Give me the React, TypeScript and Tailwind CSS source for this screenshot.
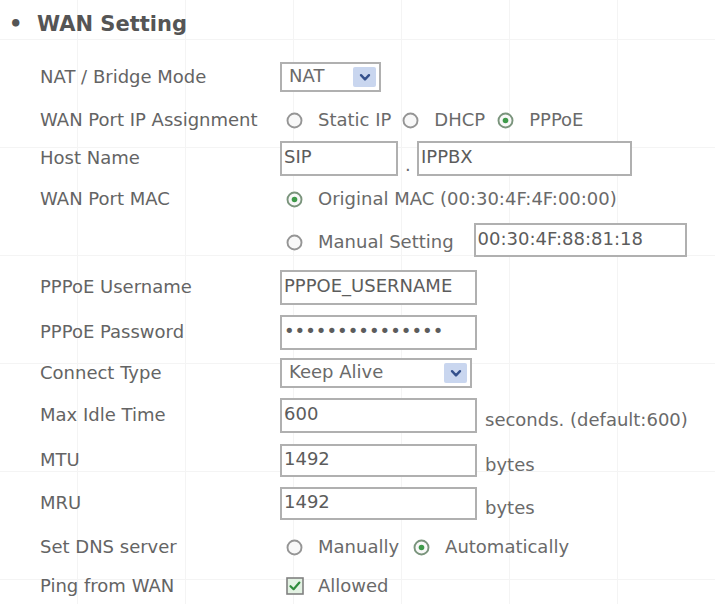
import React from "react";

// ============================================================================
// SMALL CONTROLS
// ============================================================================

function Radio({ checked }: { checked?: boolean }) {
  return (
    <svg width="17" height="17" viewBox="0 0 17 17" className="shrink-0">
      <circle cx="8.5" cy="8.5" r="7" fill="#f8f8f8" stroke={checked ? "#7a947c" : "#959595"} strokeWidth="1.9" />
      {checked && <circle cx="8.5" cy="8.5" r="2.8" fill="#3f9a4a" />}
    </svg>
  );
}

function RadioOption({ label, checked, className = "" }: { label: string; checked?: boolean; className?: string }) {
  return (
    <span className={`flex items-center ${className}`}>
      <Radio checked={checked} />
      <span className="ml-[15px]">{label}</span>
    </span>
  );
}

function Checkbox() {
  return (
    <svg width="18" height="18" viewBox="0 0 18 18" className="shrink-0">
      <rect x="1" y="1" width="16" height="16" fill="#e3f2e3" stroke="#808080" strokeWidth="1.6" />
      <path d="M4.5 9.2 L7.6 12.2 L13.4 5.6" fill="none" stroke="#2f8c3c" strokeWidth="2.2" strokeLinecap="round" strokeLinejoin="round" />
    </svg>
  );
}

function TextBox({ value, className = "" }: { value: string; className?: string }) {
  return (
    <div className={`flex items-center pl-[2px] pb-[3px] border-2 border-[#b0b0b0] bg-white text-[#5c5c5c] ${className}`}>
      {value}
    </div>
  );
}

function SelectBox({ value, className = "" }: { value: string; className?: string }) {
  return (
    <div className={`flex items-center justify-between pl-[7px] pr-[3px] border-2 border-[#b0b0b0] bg-white text-[#6a6a6a] ${className}`}>
      <span className="pb-[2px]">{value}</span>
      <span className="flex items-center justify-center w-[23px] h-[20px] bg-[#c9d6ef] rounded-[2px]">
        <svg width="12" height="9" viewBox="0 0 12 9">
          <path d="M2 2.2 L6 6.4 L10 2.2" fill="none" stroke="#34508c" strokeWidth="2.4" strokeLinecap="round" strokeLinejoin="round" />
        </svg>
      </span>
    </div>
  );
}

function Row({ label, className, children }: { label?: string; className: string; children: React.ReactNode }) {
  return (
    <div className={`flex items-center pl-[40px] ${className}`}>
      <div className="w-[240px] shrink-0 text-[#646464]">{label}</div>
      <div className="flex items-center text-[#6a6a6a]">{children}</div>
    </div>
  );
}

// ============================================================================
// PAGE
// ============================================================================

export default function App() {
  return (
    <div
      className="w-[715px] h-[604px] overflow-hidden bg-white font-['DejaVu_Sans','Verdana',sans-serif] text-[18px] leading-none bg-[linear-gradient(to_right,#f4f4f4_1px,transparent_1px),linear-gradient(to_bottom,#f4f4f4_1px,transparent_1px)] bg-[size:108px_108px] bg-[position:77px_39px]"
    >
      {/* Section title */}
      <div className="flex items-center h-[40px] mt-[4px] pl-[9px] text-[#555] font-bold text-[21px]">
        <span className="w-[28px]">•</span>
        <span>WAN Setting</span>
      </div>

      <Row label="NAT / Bridge Mode" className="h-[34px] mt-[16px]">
        <SelectBox value="NAT" className="w-[101px] h-[30px]" />
      </Row>

      <Row label="WAN Port IP Assignment" className="h-[30px] mt-[11px]">
        <RadioOption label="Static IP" className="ml-[6px]" />
        <RadioOption label="DHCP" className="ml-[11px]" />
        <RadioOption label="PPPoE" checked className="ml-[12px]" />
      </Row>

      <Row label="Host Name" className="h-[36px] mt-[5px]">
        <TextBox value="SIP" className="w-[118px] h-[35px]" />
        <span className="w-[19px] mt-[14px] pl-[7px]">.</span>
        <TextBox value="IPPBX" className="w-[215px] h-[35px]" />
      </Row>

      <Row label="WAN Port MAC" className="h-[30px] mt-[8px]">
        <RadioOption label="Original MAC (00:30:4F:4F:00:00)" checked className="ml-[6px]" />
      </Row>

      <Row className="h-[36px] mt-[8px]">
        <RadioOption label="Manual Setting" className="ml-[6px] mt-[4px]" />
        <TextBox value="00:30:4F:88:81:18" className="w-[213px] h-[34px] ml-[20px]" />
      </Row>

      <Row label="PPPoE Username" className="h-[36px] mt-[11px]">
        <TextBox value="PPPOE_USERNAME" className="w-[197px] h-[35px]" />
      </Row>

      <Row label="PPPoE Password" className="h-[36px] mt-[9px]">
        <TextBox value="•••••••••••••••" className="w-[197px] h-[35px]" />
      </Row>

      <Row label="Connect Type" className="h-[32px] mt-[7px]">
        <SelectBox value="Keep Alive" className="w-[192px] h-[30px]" />
      </Row>

      <Row label="Max Idle Time" className="h-[36px] mt-[8px]">
        <TextBox value="600" className="w-[197px] h-[35px]" />
        <span className="ml-[8px] mt-[10px]">seconds. (default:600)</span>
      </Row>

      <Row label="MTU" className="h-[34px] mt-[10px]">
        <TextBox value="1492" className="w-[197px] h-[33px]" />
        <span className="ml-[8px] mt-[10px]">bytes</span>
      </Row>

      <Row label="MRU" className="h-[34px] mt-[9px]">
        <TextBox value="1492" className="w-[197px] h-[33px]" />
        <span className="ml-[8px] mt-[10px]">bytes</span>
      </Row>

      <Row label="Set DNS server" className="h-[30px] mt-[12px]">
        <RadioOption label="Manually" className="ml-[6px]" />
        <RadioOption label="Automatically" checked className="ml-[14px]" />
      </Row>

      <Row label="Ping from WAN" className="h-[30px] mt-[9px]">
        <span className="flex items-center ml-[6px]">
          <Checkbox />
          <span className="ml-[14px]">Allowed</span>
        </span>
      </Row>
    </div>
  );
}
